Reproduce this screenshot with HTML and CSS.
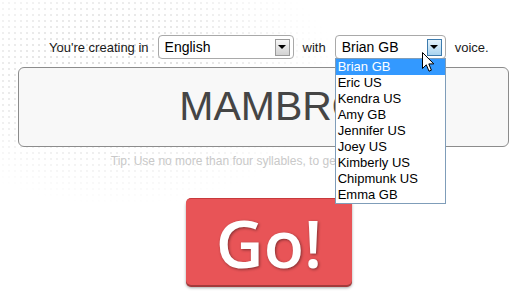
FILE: index.html
```html
<!doctype html>
<html>
    <head>
        <link rel="stylesheet" href="styles.css">
    </head>
    <body>
        <div class="page">
            <div class="options">
                <span>You're creating in</span>
                <div class="select lang">
                    <span class="value">English</span>
                    <span class="arrow"></span>
                </div>
                <span>with</span>
                <div class="select voice">
                    <span class="value">Brian GB</span>
                    <span class="arrow hover"></span>
                    <ul class="dropdown">
                        <li class="active">Brian GB</li>
                        <li>Eric US</li>
                        <li>Kendra US</li>
                        <li>Amy GB</li>
                        <li>Jennifer US</li>
                        <li>Joey US</li>
                        <li>Kimberly US</li>
                        <li>Chipmunk US</li>
                        <li>Emma GB</li>
                    </ul>
                    <svg class="pointer" width="13" height="21" viewBox="0 0 13 21">
                        <path d="M0.5 0.5 L0.5 16.5 L4.3 12.8 L7 19.2 L9.4 18.2 L6.8 11.9 L11.8 11.9 Z" fill="#fff" stroke="#000" stroke-width="1" stroke-linejoin="miter"/>
                    </svg>
                </div>
                <span>voice.</span>
            </div>

            <div class="word">MAMBRO</div>

            <p class="tip">Tip: Use no more than four syllables, to get better results.</p>

            <button class="go">Go!</button>
        </div>
    </body>
</html>
```

FILE: styles.css
```css
html {
    margin: 0;
}
body {
    margin: 0;
    padding: 0;
    width: 530px;
    height: 304px;
    overflow: hidden;
    font-family: "Liberation Sans", Arial, sans-serif;
    font-size: 13px;
    color: #1a1a1a;
    background:
        radial-gradient(ellipse 220px 130px at 120px 75px, rgba(255,255,255,0) 25%, #fff 100%),
        radial-gradient(circle, #e0e0e0 0.9px, rgba(255,255,255,0) 1.3px) 0 0 / 6px 6px,
        #fff;
}

.page {
    padding-top: 35px;
}

/* top sentence with the two pickers */
.options {
    display: flex;
    align-items: center;
    gap: 9px;
    padding-left: 49px;
    height: 24px;
}

.select {
    position: relative;
    box-sizing: border-box;
    height: 24px;
    border: 1px solid #a9a9a9;
    border-radius: 4px;
    background: #fff;
    display: flex;
    align-items: center;
    justify-content: space-between;
    padding: 0 3px 0 6px;
    font-size: 14px;
    color: #000;
}
.lang {
    width: 136px;
}
.voice {
    width: 111px;
}

.arrow {
    box-sizing: border-box;
    width: 15px;
    height: 17px;
    border: 1px solid #9a9a9a;
    background: linear-gradient(#f6f6f6, #d2d2d2);
    display: flex;
    align-items: center;
    justify-content: center;
}
.arrow::after {
    content: "";
    border-left: 4px solid transparent;
    border-right: 4px solid transparent;
    border-top: 4px solid #000;
}
.arrow.hover {
    border-color: #3d7bad;
    background: linear-gradient(#e6f3fb, #a9d4f0);
}

.dropdown {
    position: absolute;
    top: 100%;
    left: -1px;
    width: 111px;
    box-sizing: border-box;
    margin: 0;
    padding: 0;
    list-style: none;
    border: 1px solid #7f9db9;
    background: #fff;
    font-size: 13px;
    z-index: 2;
}
.dropdown li {
    height: 16px;
    line-height: 16px;
    padding-left: 2px;
}
.dropdown li.active {
    background: #3399ff;
    color: #fff;
}

.pointer {
    position: absolute;
    left: 86px;
    top: 16px;
    z-index: 3;
}

/* the word box */
.word {
    box-sizing: border-box;
    margin: 8px 21px 0 18px;
    height: 80px;
    border: 1px solid #8c8c8c;
    border-radius: 6px;
    background: #f8f8f8;
    font-size: 41px;
    line-height: 77px;
    text-align: center;
    text-indent: 16px;
    color: #454545;
}

.tip {
    margin: 7px 0 0;
    font-size: 12px;
    line-height: 14px;
    text-align: center;
    text-indent: -4px;
    color: #c9c9c9;
}

.go {
    display: block;
    margin: 30px 0 0 186px;
    width: 166px;
    height: 87px;
    padding: 0;
    border: none;
    border-top: 1px solid #c8393c;
    border-radius: 5px;
    background: #e85457;
    box-shadow: 0 2px 0 #a33a3b, 0 3px 3px rgba(0, 0, 0, 0.35);
    font-family: "Open Sans", sans-serif;
    font-weight: 600;
    font-size: 66px;
    line-height: 84px;
    color: #fff;
    text-shadow: 1px 1px 3px rgba(0, 0, 0, 0.45);
}
```
